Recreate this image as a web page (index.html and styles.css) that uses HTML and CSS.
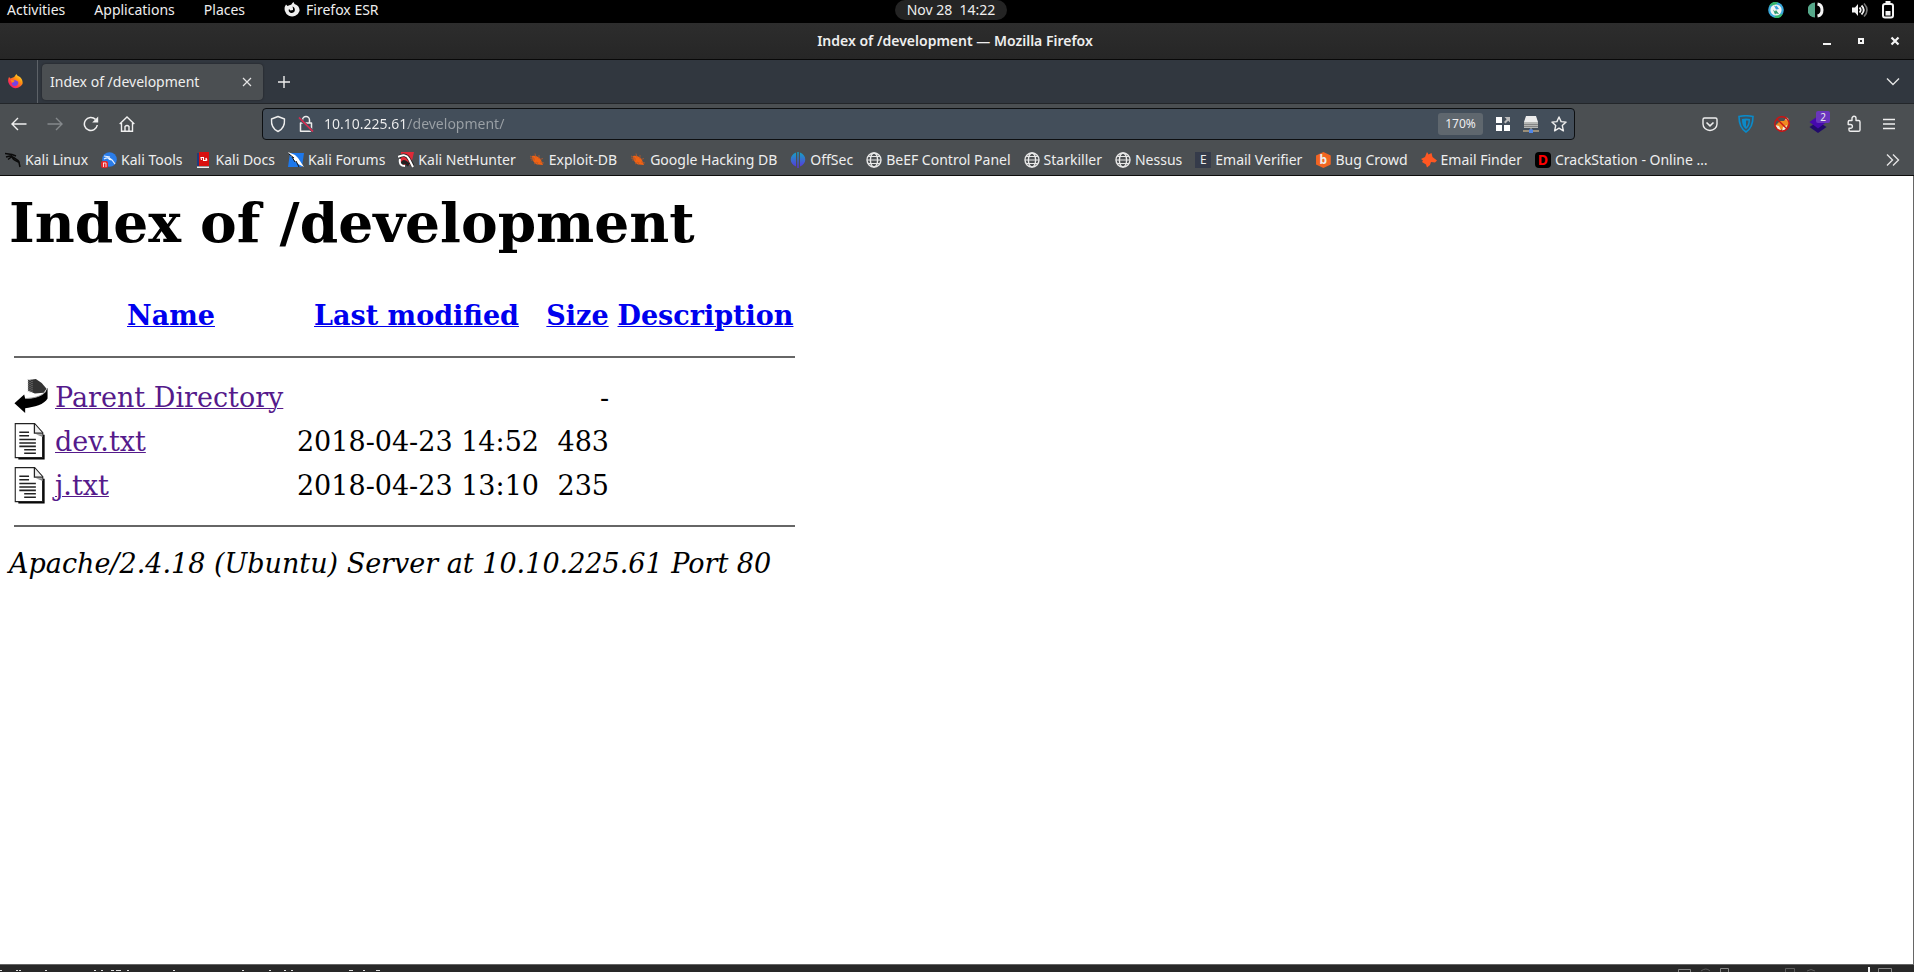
FILE: index.html
```html
<!DOCTYPE html>
<html lang="en">
<head>
<meta charset="utf-8">
<title>Index of /development</title>
<link rel="stylesheet" href="styles.css">
</head>
<body>
<svg class="defs" aria-hidden="true">
  <defs>
    <linearGradient id="flame" x1="1" y1="0" x2="0.2" y2="1"><stop offset="0" stop-color="#fff44f"/><stop offset=".4" stop-color="#ff980e"/><stop offset=".75" stop-color="#ff3647"/><stop offset="1" stop-color="#e31587"/></linearGradient>
    <linearGradient id="offsec" x1="0" y1="0" x2="0" y2="1"><stop offset="0" stop-color="#12a5c4"/><stop offset=".5" stop-color="#3a6bd0"/><stop offset="1" stop-color="#5a2fe0"/></linearGradient>
    <symbol id="globe" viewBox="0 0 16 16"><g fill="none" stroke="#e8e8e8" stroke-width="1.4"><circle cx="8" cy="8" r="7"/><ellipse cx="8" cy="8" rx="3.6" ry="7"/><path d="M1 8h14M2.300 4.500h11.400M2.300 11.500h11.400" stroke-width="1"/></g></symbol>
    <symbol id="bug" viewBox="0 0 16 16"><path d="M3 4c4-1 7 1 9 4l2 5-5-.5C6 12 3 9 3 4z" fill="#f26212"/><path d="M1 4l4 2M2 8l4 0M5 12l3-2M6 1.500l1 4M10 3l0 4M14 6.500l-3 1M15 11l-4-1M1 6l5 1M8 13l1-3" stroke="#b9592a" stroke-width=".8"/></symbol>
    <symbol id="page" viewBox="0 0 34 38"><path d="M4 37.500h27V12h-2v23H4z" fill="#000"/><path d="M.7.700h20L29 10v25.500H.7z" fill="#fff" stroke="#222" stroke-width="1.400"/><path d="M20.500 1v9.500H29" fill="#eee" stroke="#222" stroke-width="1.300"/><path d="M22 11.500h7v3z" fill="#888"/><path d="M5 9.500h10M5 13h10M5 17h17M5 20.500h17M5 24h17M10 27.500h12M10 31h12" stroke="#222" stroke-width="1.600"/></symbol>
  </defs>
</svg>

<header class="panel">
  <nav class="panel-menu">
    <button>Activities</button>
    <button>Applications</button>
    <button>Places</button>
    <button class="app"><svg width="16" height="16" viewBox="0 0 16 16"><path d="M2 2.500l1.500 1.500L6 3C8 3 7.500 1 9.500 0l1 2c3.500 1 5.500 4 5 7A7.600 7.600 0 1 1 2 2.500z" fill="#eee"/><path d="M8.500 4.500c3 1 3.500 6-.5 6.500-2.500 0-4-2-3-4l1.500 1.500L9 8V6.500z" fill="#000"/></svg>Firefox ESR</button>
  </nav>
  <button class="clock">Nov 28&nbsp; 14:22</button>
  <div class="tray">
    <svg class="tray-vpn" width="16" height="16" viewBox="0 0 16 16"><circle cx="8" cy="8" r="7.800" fill="#3aa9dc"/><path d="M1 4a8 8 0 0 1 9-4L8 3z M15 12a8 8 0 0 1-9 4l2-3z" fill="#35b36b"/><circle cx="8" cy="8" r="5.600" fill="#f4f4f4"/><path d="M6 3.500l2 1 .5-1L11 7 8 7.500z" fill="#3a9fd8"/><path d="M5 7.500l2 2L8 8l3 4-3-.5-1 1z" fill="#2d9a6c"/></svg>
    <svg class="tray-half" width="16" height="16" viewBox="0 0 16 16"><path d="M7 .5v15a7.500 7.500 0 0 1 0-15z" fill="#56a88a"/><path d="M9.500 2c6 1 6 11 0 12" fill="none" stroke="#f4f4f4" stroke-width="3"/></svg>
    <svg class="tray-sound" width="16" height="16" viewBox="0 0 16 16"><path d="M0 5.500h3l3-3.500v12l-3-3.500H0z" fill="#f4f4f4"/><path d="M7.500 5.500q2.500 2.500 0 5M9.500 3.500q4.500 4.500 0 9" fill="none" stroke="#f4f4f4" stroke-width="1.800"/><path d="M12 1.500q6 6.500 0 13" fill="none" stroke="#777" stroke-width="1.600"/></svg>
    <svg class="tray-battery" width="14" height="18" viewBox="0 0 14 18"><path d="M4.500 0h5v2h-5z" fill="#f4f4f4"/><rect x="2" y="3" width="10" height="13.500" rx="2" fill="none" stroke="#f4f4f4" stroke-width="2"/><path d="M4.500 10h5v4.500h-5z" fill="#f4f4f4"/></svg>
  </div>
</header>

<div class="titlebar">
  <span class="title">Index of /development — Mozilla Firefox</span>
  <div class="controls">
    <button aria-label="Minimize"><svg width="10" height="10"><path d="M1 7h8v2H1z" fill="#f4f4f4"/></svg></button>
    <button aria-label="Restore"><svg width="10" height="10"><rect x="3" y="3" width="4" height="4" fill="none" stroke="#f4f4f4" stroke-width="2"/></svg></button>
    <button aria-label="Close"><svg width="10" height="10"><path d="M1.500 1.500l7 7M8.500 1.500l-7 7" stroke="#f4f4f4" stroke-width="2.200"/></svg></button>
  </div>
</div>

<div class="tabs">
  <button class="view" aria-label="Firefox View"><svg width="16" height="16" viewBox="0 0 16 16"><path d="M2 3l1.500 1.500L6 3.500C8 3 8 1 9.500 0c.5 2 2.500 2 3.500 3 2 2 3 4 2.500 7A7.600 7.600 0 1 1 2 3z" fill="url(#flame)"/><path d="M5 6h3l3 1.500c1 2-.5 4.500-3 4.500S4.500 10 5 8z" fill="#7542e5"/><path d="M3.500 5.500l4 1c0 2-2 1.500-2.500 2.500z" fill="#ff8a16"/></svg></button>
  <div class="tab">
    <span class="tab-name">Index of /development</span>
    <button aria-label="Close tab"><svg width="10" height="10"><path d="M1 1l8 8M9 1l-8 8" stroke="#e4e4e4" stroke-width="1.200"/></svg></button>
  </div>
  <button class="new" aria-label="New tab"><svg width="12" height="12"><path d="M6 0v12M0 6h12" stroke="#eee" stroke-width="1.400"/></svg></button>
  <button class="all" aria-label="List all tabs"><svg width="14" height="10"><path d="M1 1.500l6 6 6-6" fill="none" stroke="#e4e4e4" stroke-width="1.400"/></svg></button>
</div>

<div class="toolbar">
  <div class="nav">
    <button aria-label="Back"><svg width="16" height="16"><path d="M15.500 8H1.500M7 2L1 8l6 6" fill="none" stroke="#f0f0f0" stroke-width="1.400"/></svg></button>
    <button aria-label="Forward" disabled><svg width="16" height="16"><path d="M.5 8h14M9 2l6 6-6 6" fill="none" stroke="#85898c" stroke-width="1.400"/></svg></button>
    <button aria-label="Reload"><svg width="16" height="16"><path d="M14.300 9A6.500 6.500 0 1 1 12.500 3.400" fill="none" stroke="#f0f0f0" stroke-width="1.500"/><path d="M15.200.6v6h-6z" fill="#f0f0f0"/></svg></button>
    <button aria-label="Home"><svg width="16" height="16"><path d="M.7 8L8 1l7.300 7M2.500 7v8.200h11V7M6 15v-4.500q2-2 4 0V15" fill="none" stroke="#f0f0f0" stroke-width="1.400"/></svg></button>
  </div>
  <div class="address">
    <svg width="16" height="18" viewBox="0 0 16 18"><path d="M8 1.500l6.500 2.500c.4 6-2 10.500-6.500 12.500C3.500 14.500 1.100 10 1.500 4z" fill="none" stroke="#eee" stroke-width="1.400" stroke-linejoin="round"/></svg>
    <svg class="lock" width="16" height="18" viewBox="0 0 16 18"><path d="M4.500 8V5a3.500 3.500 0 0 1 7 0v3M2.500 8h11v8.300h-11z" fill="none" stroke="#eee" stroke-width="1.500" stroke-linejoin="round"/><path d="M1 3l14 13.500" stroke="#4a5560" stroke-width="3"/><path d="M1 2.500l14 14" stroke="#e22850" stroke-width="1.500"/></svg>
    <input class="url" aria-label="Address" value="10.10.225.61/development/">
    <button class="zoom">170%</button>
    <button aria-label="Container"><svg width="16" height="16"><path d="M1 1h6v6H1zM1 9h6v6H1zM9 9h6v6H9z" fill="#fff"/><path d="M9.500 1H15v5.500l-1.800-1.800-2.700 2.700-1.500-1.500 2.700-2.700z" fill="#bbb"/></svg></button>
    <button aria-label="Proxy"><svg width="16" height="18" viewBox="0 0 16 18"><path d="M3 1h10l2 6H1z" fill="#ececec"/><path d="M1 7h14v6H1z" fill="#b5b7b5"/><path d="M1 9.500h14M1 11.500h14" stroke="#777" stroke-width=".8"/><path d="M0 16h16" stroke="#9a8e78" stroke-width="2"/><path d="M8 13v2" stroke="#bbb"/><rect x="6" y="14.500" width="4" height="3.500" fill="#5288e8"/></svg></button>
    <button aria-label="Bookmark this page"><svg width="16" height="16"><path d="M8 1l2.100 4.600 5 .5-3.800 3.500 1.100 5.200L8 12.200l-4.400 2.600 1.100-5.200L.9 6.100l5-.5z" fill="none" stroke="#eee" stroke-width="1.400" stroke-linejoin="round"/></svg></button>
  </div>
  <div class="extensions">
    <button aria-label="Save to Pocket"><svg width="16" height="16"><path d="M2.500 2h11q1.500 0 1.500 1.500V8a7 6.500 0 0 1-14 0V3.500Q1 2 2.500 2z" fill="none" stroke="#eee" stroke-width="1.400"/><path d="M4.500 6.500L8 9.800l3.500-3.300" fill="none" stroke="#eee" stroke-width="1.600"/></svg></button>
    <button aria-label="ZenMate"><svg width="16" height="18" viewBox="0 0 16 18"><path d="M1 1.500q7-1.500 14 0c0 7-1.500 12-7 15.500C2.500 13.500 1 8.500 1 1.500z" fill="#3a5364" stroke="#0b8ac8" stroke-width="1.600"/><path d="M4 4q4-1 8 0c0 5-1 8-4 10-3-2-4-5-4-10z" fill="#0b8ac8"/><path d="M8 5.500h2.500c0 3-1 5-2.500 6.500z" fill="#3a5364"/></svg></button>
    <button aria-label="FoxyProxy"><svg width="16" height="18" viewBox="0 0 16 18"><path d="M2 10l4-4h4l3-4 2 6-3 6-7 1z" fill="#f08a20"/><path d="M1 10l4 1 2 4-4-1zM9 12l4-2-1 4-4 2zM11 4l3-1 1 4z" fill="#f0ead8"/><circle cx="8" cy="9" r="7.200" fill="none" stroke="#cc1414" stroke-width="1.500"/><path d="M3 4l10 10" stroke="#cc1414" stroke-width="1.500"/></svg></button>
    <button class="wapp" aria-label="Wappalyzer, 2 found"><svg width="18" height="18" viewBox="0 0 18 18"><path d="M9 6.500l8.500 5.500L9 18 .5 12z" fill="#210a6b"/><path d="M9 1l8.500 6L9 13.500.5 7z" fill="#4608ad"/></svg><span class="badge">2</span></button>
    <button aria-label="Extensions"><svg width="16" height="18" viewBox="0 0 16 18"><path d="M6 5.500V3.300a2 2 0 0 1 4 0v2.200h2.500q1.500 0 1.500 1.500v8q0 1.300-1.500 1.300h-8Q3 16.300 3 15v-1.700h1.500a1.900 1.900 0 0 0 0-3.800H2.200V7q0-1.500 1.500-1.500z" fill="none" stroke="#eee" stroke-width="1.400" stroke-linejoin="round"/></svg></button>
    <button aria-label="Menu"><svg width="14" height="14"><path d="M1 2.500h12M1 7h12M1 11.500h12" stroke="#eee" stroke-width="1.300"/></svg></button>
  </div>
</div>

<nav class="bookmarks">
  <a href="#"><svg width="16" height="16" viewBox="0 0 16 16"><path d="M0 1.500l7 1 4 1.500M1 5l6-1.500M3 7.500l4-3c3 2 6 3 7.500 6M7 4.500c1 4 4 4 7 6l1 4.500" fill="none" stroke="#0b0b0b" stroke-width="1.500"/></svg>Kali Linux</a>
  <a href="#"><svg width="16" height="16" viewBox="0 0 16 16"><circle cx="8.500" cy="7.500" r="7.300" fill="#2b7de9"/><path d="M3 4l6 1M3 7c3-2 6-1 8 1l3 4M7 6c1 2 3 2 4 2" fill="none" stroke="#e9f2ff" stroke-width="1.200"/><rect y="9" width="7" height="7" rx="2" fill="#e3262b"/><path d="M2 11h3M2.500 11v4M5 11v4" stroke="#fff" stroke-width=".8"/></svg>Kali Tools</a>
  <a href="#"><svg width="16" height="16" viewBox="0 0 16 16"><path d="M1 1h2v13H1z" fill="#203a7c"/><path d="M3 0h10v14H3z" fill="#d8100f"/><path d="M1 14.500h12V16H1z" fill="#eee"/><path d="M5.500 8L5 5.500h2.500v3H10V6L11 8.500" fill="none" stroke="#fff" stroke-width="1.100"/></svg>Kali Docs</a>
  <a href="#"><svg width="16" height="16" viewBox="0 0 16 16"><path d="M2 1h14l-2 14H0z" fill="#1d78ec"/><path d="M0 0l7 3 3 3 6 9-6-3-4-4z" fill="#fff"/><path d="M1 2l5 4M8 9l3 6M4 5l3 5" stroke="#111" stroke-width="1"/></svg>Kali Forums</a>
  <a href="#"><svg width="16" height="16" viewBox="0 0 16 16"><path d="M3 0h13l-3 13H2z" fill="#e02a38"/><path d="M1 5c4-3 8-2 10 2l4 7M11 13l-4-3c-2-1-3 1-2 3" fill="none" stroke="#222" stroke-width="3.500"/><path d="M0 5c5-3 9-2 11 2l4 8M2 7c-1 5 1 7 5 7" fill="none" stroke="#fff" stroke-width="2"/></svg>Kali NetHunter</a>
  <a href="#"><svg width="16" height="16"><use href="#bug"/></svg>Exploit-DB</a>
  <a href="#"><svg width="16" height="16"><use href="#bug"/></svg>Google Hacking DB</a>
  <a href="#"><svg width="16" height="16" viewBox="0 0 16 16"><path d="M6 .5v14C-1 12-1 3 6 .5zM10 .5v14C17 12 17 3 10 .5zM7.300 0h1.400v16H7.300z" fill="url(#offsec)"/></svg>OffSec</a>
  <a href="#"><svg width="16" height="16"><use href="#globe"/></svg>BeEF Control Panel</a>
  <a href="#"><svg width="16" height="16"><use href="#globe"/></svg>Starkiller</a>
  <a href="#"><svg width="16" height="16"><use href="#globe"/></svg>Nessus</a>
  <a href="#"><span class="tile tile-e">E</span>Email Verifier</a>
  <a href="#"><span class="tile tile-b">b</span>Bug Crowd</a>
  <a href="#"><svg width="16" height="16" viewBox="0 0 16 16"><path d="M6 0l1.500 2.500L10.500 1l1 4 4.500 3.500-2 2-4-.5-1 3-3 2.500-1-3-4-2.500L2 8.500 0 7l4-2z" fill="#ff5722"/></svg>Email Finder</a>
  <a href="#"><span class="tile tile-d">D</span>CrackStation - Online …</a>
  <button class="more" aria-label="More bookmarks"><svg width="14" height="14"><path d="M1 1.500L6.500 7 1 12.500M7 1.500L12.500 7 7 12.500" fill="none" stroke="#e4e4e4" stroke-width="1.400"/></svg></button>
</nav>

<main class="page">
  <h1>Index of /development</h1>
  <table>
    <tr><th class="icon"></th><th class="name"><a href="#">Name</a></th><th class="date"><a href="#">Last modified</a></th><th class="size"><a href="#">Size</a></th><th class="desc"><a href="#">Description</a></th></tr>
    <tr><th colspan="5"><hr></th></tr>
    <tr><td><svg width="34" height="37" viewBox="0 0 34 38"><path d="M14 1l8-1 6 4 5 6-3 4-9 1-7-3z" fill="#333"/><path d="M14 0v13M16 1v13M18 0v14" stroke="#aaa" stroke-width=".8" stroke-dasharray="1 1"/><path d="M34 9v11c-3 6-14 9-23 10v5L0 25l10-9 1 4c8 0 17-2 21-7z" fill="#000"/><path d="M11 20c8 0 17-2 21-7" fill="none" stroke="#999" stroke-width="1"/></svg></td><td><a class="visited" href="#">Parent Directory</a></td><td></td><td class="num">-</td><td></td></tr>
    <tr><td><svg width="34" height="37" viewBox="0 0 34 38"><use href="#page"/></svg></td><td><a class="visited" href="#">dev.txt</a></td><td class="num">2018-04-23 14:52</td><td class="num">483</td><td></td></tr>
    <tr><td><svg width="34" height="37" viewBox="0 0 34 38"><use href="#page"/></svg></td><td><a class="visited" href="#">j.txt</a></td><td class="num">2018-04-23 13:10</td><td class="num">235</td><td></td></tr>
    <tr><th colspan="5"><hr></th></tr>
  </table>
  <address>Apache/2.4.18 (Ubuntu) Server at 10.10.225.61 Port 80</address>
</main>

<footer class="statusbar">
  <svg width="480" height="3"><path d="M0 1.500h2M16 1.500h2M19 1.500h2M45 1.500h2M94 1.500h2M101 1.500h2M111 1.500h3M116 1.500h5M127 1.500h2M173 1.500h2M242 1.500h2M269 1.500h2M284 1.500h2M291 1.500h2M349 1.500h4M363 1.500h2M376 1.500h4" stroke="#ddd"/></svg>
  <svg width="240" height="6"><g fill="none" stroke="#858585"><path d="M4.500 6V3.500h12V6M46.500 6V2.500h8V6M204.500 6V2.500h13V6"/><path d="M27 5q5-4 9 0M111.500 6V2.500h9V6M133 5q4-3 8 0" stroke="#5c5c5c"/></g><path d="M194 1h2v5h-2z" fill="#f4f4f4"/></svg>
</footer>
</body>
</html>
```

FILE: styles.css
```css
* { box-sizing: border-box; }
body {
  margin: 0;
  min-height: 100vh;
  display: flex;
  flex-direction: column;
  background: #fff;
  color: #eee;
  font: 14px/20px "Noto Sans", sans-serif;
  overflow: hidden;
}
button {
  display: flex;
  align-items: center;
  justify-content: center;
  padding: 0;
  border: 0;
  background: none;
  color: inherit;
  font: inherit;
}
svg { display: block; flex: none; }
.defs { position: absolute; width: 0; height: 0; }

.panel {
  display: grid;
  grid-template-columns: 1fr auto 1fr;
  height: 23px;
  padding: 0 19px 3px 7px;
  background: #000;
}
.panel-menu { display: flex; gap: 29px; }
.app { gap: 6px; margin-left: 10px; }
.clock { padding: 0 12px; border-radius: 10px; background: #242424; }
.tray { display: flex; justify-content: flex-end; align-items: center; gap: 20px; }
.tray-half { margin: 0 8px 0 4px; }
.tray-battery { margin-left: -7px; }

.titlebar {
  display: grid;
  grid-template-columns: 1fr auto 1fr;
  align-items: center;
  height: 37px;
  padding: 0 14px 0 10px;
  border-bottom: 1px solid #080808;
  background: linear-gradient(#2d2d2d, #262626);
  font-weight: 600;
}
.title { grid-column: 2; }
.controls { display: flex; justify-content: flex-end; gap: 24px; }

.tabs {
  display: flex;
  align-items: center;
  height: 44px;
  padding-right: 14px;
  border-bottom: 1px solid #23262a;
  background: #31373f;
}
.view { width: 38px; height: 100%; padding-right: 7px; border-right: 1px solid #5d6268; }
.tab {
  display: flex;
  align-items: center;
  justify-content: space-between;
  width: 221px;
  height: 36px;
  margin-left: 4px;
  padding: 0 11px 0 8px;
  border-radius: 4px;
  background: #4b4f52;
  box-shadow: 0 0 2px #1b1d20;
}
.new { margin-left: 15px; }
.all { margin-left: auto; }

.toolbar {
  display: flex;
  align-items: center;
  height: 40px;
  padding: 0 18px 0 11px;
  background: #4b4f52;
}
.nav { display: flex; gap: 20px; }
.address {
  display: flex;
  flex: 1;
  align-items: center;
  gap: 12px;
  height: 32px;
  margin: 0 127px;
  padding: 0 7px;
  border: 1px solid #0d0f11;
  border-radius: 4px;
  background: #434e5a;
}
.url {
  flex: 1;
  min-width: 0;
  padding: 0;
  border: 0;
  outline: 0;
  color: transparent;
  font: inherit;
  background: linear-gradient(90deg, #f0f0f0 84px, #9ba1a6 84px);
  -webkit-background-clip: text;
  background-clip: text;
}
.lock { margin-right: -2px; }
.zoom { width: 45px; height: 22px; border-radius: 3px; background: #5f676e; font-size: 12px; }
.extensions { display: flex; gap: 20px; }
.wapp { position: relative; width: 16px; }
.badge {
  position: absolute;
  top: -4px;
  left: 6px;
  width: 14px;
  height: 12px;
  border-radius: 2px;
  background: #6a35bd;
  font-size: 10px;
  line-height: 12px;
}

.bookmarks {
  display: flex;
  align-items: center;
  gap: 13px;
  height: 32px;
  padding: 1px 14px 0 5px;
  border-bottom: 1px solid #0c0c0c;
  background: #4b4f52;
  white-space: nowrap;
}
.bookmarks a { display: flex; align-items: center; gap: 4px; color: inherit; text-decoration: none; }
.more { margin-left: auto; }
.tile { width: 16px; height: 16px; font-size: 12px; line-height: 16px; text-align: center; }
.tile-e { background: #353b4a; }
.tile-b {
  background: #f26522;
  font-weight: 700;
  clip-path: polygon(50% 0, 96% 22%, 96% 78%, 50% 100%, 4% 78%, 4% 22%);
}
.tile-d { border-radius: 4px; background: #000; color: #f00; font-size: 14px; font-weight: 700; }

.page {
  flex: 1;
  padding: 15px 9px 0;
  border-right: 1px solid #666;
  color: #000;
  font: 27px/32px "DejaVu Serif", serif;
}
h1 { margin: 0 0 38px; font-size: 55px; line-height: 63px; }
table { margin-bottom: 2px; border-spacing: 3px; }
th, td { padding: 2px; }
.icon { height: 42px; }
.name { width: 236px; }
.date { width: 249px; }
.size { width: 67px; }
.desc { width: 183px; }
.num { text-align: right; }
.page a { color: #00e; text-decoration-thickness: 1px; }
.page .visited { color: #551a8b; }
hr { height: 2px; margin: 14px 0; border: 0; background: #666; }

.statusbar {
  display: flex;
  align-items: flex-end;
  justify-content: space-between;
  height: 8px;
  border-top: 1px solid #666;
  background: #282828;
}
```
